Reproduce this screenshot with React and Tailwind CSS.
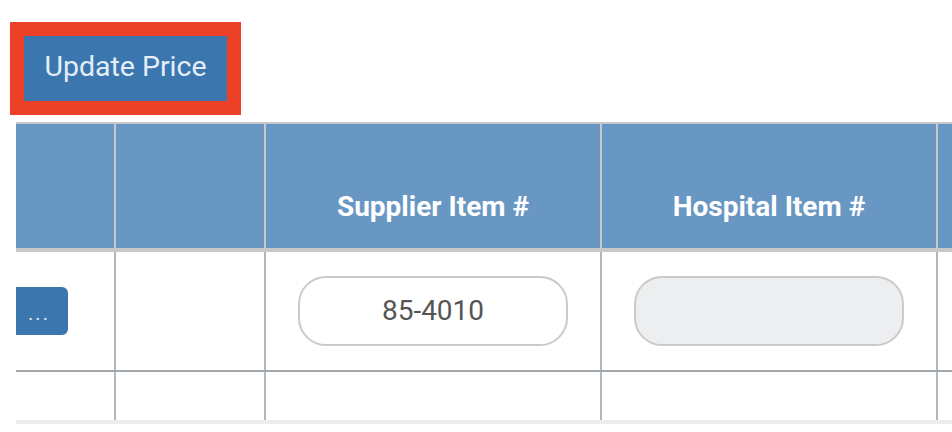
import React from "react";

const COLS = ["w-[100px]", "w-[150px]", "w-[336px]", "w-[336px]", "flex-1"];

function HeaderRow(){
  const labels = ["", "", "Supplier Item #", "Hospital Item #", ""];
  return (
    <div className="flex h-[130px] bg-[#6897c4] border-t-2 border-b-4 border-[#c9c9c9]">
      {labels.map((l, i) => (
        <div key={i} className={`${COLS[i]} ${i < 4 ? "border-r-2 border-[#c9c9c9]" : ""} flex items-end justify-center pb-[25px]`}>
          <span className="text-[28px] font-bold text-white leading-[33px]">{l}</span>
        </div>
      ))}
    </div>
  );
}

function Pill({ value, disabled }){
  return (
    <div className={`w-[270px] h-[70px] rounded-[28px] border-2 border-[#cacaca] flex items-center justify-center text-[28px] text-[#555] ${disabled ? "bg-[#edeef0]" : "bg-white"}`}>
      {value}
    </div>
  );
}

export default function App(){
  return (
    <div className="w-[952px] h-[432px] bg-white overflow-hidden font-['Roboto',sans-serif]">
      <div className="pt-[22px] pl-[10px]">
        <div className="inline-block border-[14px] border-[#ec4027]">
          <button type="button" className="block w-[203px] h-[65px] bg-[#3b76ae] text-[28.5px] text-[#e4eef9] leading-none pb-[2px]">Update Price</button>
        </div>
      </div>

      <div className="ml-[16px] mt-[7px]">
        <HeaderRow />

        <div className="flex h-[120px] border-b-2 border-[#a3a8ad]">
          <div className={`${COLS[0]} border-r-2 border-[#b2b7bc] flex items-center`}>
            <button type="button" className="w-[52px] h-[48px] bg-[#3b76ae] rounded-r-[6px] text-[#dbe7f3] text-[20px] tracking-[2px] leading-none pt-[4px] pr-[6px]">...</button>
          </div>
          <div className={`${COLS[1]} border-r-2 border-[#b2b7bc]`}></div>
          <div className={`${COLS[2]} border-r-2 border-[#b2b7bc] flex items-center justify-center`}>
            <Pill value="85-4010" />
          </div>
          <div className={`${COLS[3]} border-r-2 border-[#b2b7bc] flex items-center justify-center`}>
            <Pill value="" disabled />
          </div>
          <div className={COLS[4]}></div>
        </div>

        <div className="flex h-[48px]">
          <div className={`${COLS[0]} border-r-2 border-[#b2b7bc]`}></div>
          <div className={`${COLS[1]} border-r-2 border-[#b2b7bc]`}></div>
          <div className={`${COLS[2]} border-r-2 border-[#b2b7bc]`}></div>
          <div className={`${COLS[3]} border-r-2 border-[#b2b7bc]`}></div>
          <div className={COLS[4]}></div>
        </div>
        <div className="h-[4px] bg-[#ececec]"></div>
      </div>
    </div>
  );
}
